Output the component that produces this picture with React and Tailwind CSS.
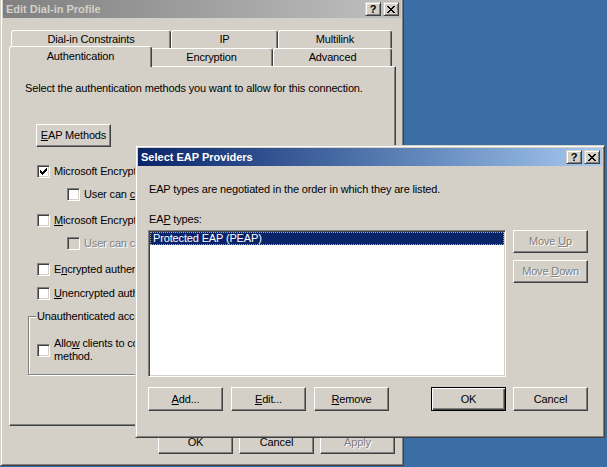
import React from 'react';

// classic 3d bevels
const raised = 'border border-t-white border-l-white border-r-[#404040] border-b-[#404040] shadow-[inset_-1px_-1px_#808080]';
const sunken = 'border border-t-[#808080] border-l-[#808080] border-r-white border-b-white shadow-[inset_1px_1px_#404040,inset_-1px_-1px_#d4d0c8]';
const dimText = 'text-[#808080] [text-shadow:1px_1px_0_#ffffff]';

function Button({ children, className = '', disabled, isDefault }) {
  const frame = isDefault
    ? 'border border-black shadow-[inset_1px_1px_#ffffff,inset_-1px_-1px_#404040,inset_-2px_-2px_#808080]'
    : raised;
  return (
    <div className={`flex items-center justify-center shrink-0 bg-[#d4d0c8] ${frame} ${disabled ? dimText : ''} ${className}`}>
      {children}
    </div>
  );
}

function CaptionButtons() {
  const cap = 'w-[16px] h-[14px] flex items-center justify-center bg-[#d4d0c8] border border-t-[#d4d0c8] border-l-[#d4d0c8] border-r-[#404040] border-b-[#404040] shadow-[inset_1px_1px_#ffffff,inset_-1px_-1px_#808080]';
  return (
    <div className="flex gap-[2px]">
      <div className={cap}>
        <span className="font-bold text-[11px] leading-[11px] text-black tracking-normal">?</span>
      </div>
      <div className={cap}>
        <svg width="8" height="7" viewBox="0 0 8 7" shapeRendering="crispEdges">
          <path fill="#000" d="M0 0h2v1H0zM6 0h2v1H6zM1 1h2v1H1zM5 1h2v1H5zM2 2h4v1H2zM3 3h2v1H3zM2 4h4v1H2zM1 5h2v1H1zM5 5h2v1H5zM0 6h2v1H0zM6 6h2v1H6z" />
        </svg>
      </div>
    </div>
  );
}

function Check({ checked, disabled }) {
  return (
    <span className={`relative block w-[13px] h-[13px] shrink-0 ${sunken} ${disabled ? 'bg-[#d4d0c8]' : 'bg-white'}`}>
      {checked && (
        <svg className="absolute left-[2px] top-[2px]" width="7" height="7" viewBox="0 0 7 7" shapeRendering="crispEdges">
          <path fill="#000" d="M0 2h1v3H0zM1 3h1v3H1zM2 4h1v3H2zM3 3h1v3H3zM4 2h1v3H4zM5 1h1v3H5zM6 0h1v3H6z" />
        </svg>
      )}
    </span>
  );
}

function CheckRow({ className = '', checked, disabled, children }) {
  return (
    <div className={`flex items-center gap-[4px] whitespace-nowrap ${className}`}>
      <Check checked={checked} disabled={disabled} />
      <span className={disabled ? dimText : ''}>{children}</span>
    </div>
  );
}

function Tab({ label, className = '', selected }) {
  return (
    <div
      className={`flex justify-center shrink-0 bg-[#d4d0c8] border-t border-l border-r border-t-white border-l-white border-r-[#404040] rounded-t-[3px] shadow-[inset_-1px_0_#808080] ${
        selected ? 'h-[21px] -ml-[2px] -mr-[2px] -mb-[1px] relative z-10 pt-[3px]' : 'h-[18px] pt-[2px]'
      } ${className}`}
    >
      {label}
    </div>
  );
}

function EditDialInProfile() {
  return (
    <div className={`absolute left-0 -top-[3px] w-[404px] h-[469px] bg-[#d4d0c8] border border-t-[#d4d0c8] border-l-[#d4d0c8] border-r-[#404040] border-b-[#404040] shadow-[inset_1px_1px_#ffffff,inset_-1px_-1px_#808080] p-[2px] flex flex-col`}>
      <div className="h-[18px] flex items-center justify-between pl-[3px] pr-[2px] bg-linear-to-r from-[#808080] to-[#c0c0c0]">
        <span className="font-bold text-[#d4d0c8] tracking-normal">Edit Dial-in Profile</span>
        <CaptionButtons />
      </div>

      <div className="ml-[6px] mt-[12px] w-[387px] flex flex-col">
        <div className="h-[18px] flex pl-[2px]">
          <Tab label="Dial-in Constraints" className="w-[160px]" />
          <Tab label="IP" className="w-[107px]" />
          <Tab label="Multilink" className="w-[114px]" />
        </div>
        <div className="h-[18px] flex items-end pl-[2px]">
          <Tab label="Authentication" className="w-[143px]" selected />
          <Tab label="Encryption" className="w-[123px]" />
          <Tab label="Advanced" className="w-[119px]" />
        </div>

        <div className="h-[360px] flex flex-col overflow-hidden border border-t-white border-l-white border-r-[#404040] border-b-[#404040] shadow-[inset_-1px_-1px_#808080]">
          <p className="mt-[15px] ml-[15px] whitespace-nowrap">
            Select the authentication methods you want to allow for this connection.
          </p>
          <Button className="mt-[29px] ml-[26px] w-[75px] h-[23px]">
            <span><u>E</u>AP Methods</span>
          </Button>

          <CheckRow className="mt-[18px] ml-[27px]" checked>
            Microsoft Encrypted Authentication version <u>2</u> (MS-CHAP v2)
          </CheckRow>
          <CheckRow className="mt-[10px] ml-[57px]">
            User can <u>c</u>hange password after it has expired
          </CheckRow>
          <CheckRow className="mt-[13px] ml-[27px]">
            <u>M</u>icrosoft Encrypted Authentication (MS-CHAP)
          </CheckRow>
          <CheckRow className="mt-[10px] ml-[57px]" disabled>
            User can c<u>h</u>ange password after it has expired
          </CheckRow>
          <CheckRow className="mt-[13px] ml-[27px]">
            E<u>n</u>crypted authentication (CHAP)
          </CheckRow>
          <CheckRow className="mt-[11px] ml-[27px]">
            <u>U</u>nencrypted authentication (PAP, SPAP)
          </CheckRow>

          <div className="relative mt-[16px] ml-[18px] w-[358px] h-[59px] shrink-0 border border-[#808080] shadow-[inset_1px_1px_#ffffff,1px_1px_#ffffff]">
            <span className="absolute -top-[7px] left-[7px] px-[1px] bg-[#d4d0c8] whitespace-nowrap">
              Unauthenticated access
            </span>
            <div className="flex items-center gap-[4px] ml-[8px] mt-[20px]">
              <Check />
              <span className="whitespace-nowrap">
                Allo<u>w</u> clients to connect without negotiating an authentication
                <br />
                method.
              </span>
            </div>
          </div>
        </div>
      </div>

      <div className="mt-[5px] mr-[6px] flex justify-end gap-[6px]">
        <Button className="w-[75px] h-[23px]">OK</Button>
        <Button className="w-[75px] h-[23px]">Cancel</Button>
        <Button className="w-[75px] h-[23px]" disabled>Apply</Button>
      </div>
    </div>
  );
}

function SelectEapProviders() {
  return (
    <div className="absolute left-[135px] top-[145px] w-[470px] h-[293px] bg-[#d4d0c8] border border-t-[#d4d0c8] border-l-[#d4d0c8] border-r-[#404040] border-b-[#404040] shadow-[inset_1px_1px_#ffffff,inset_-1px_-1px_#808080] p-[2px] flex flex-col">
      <div className="h-[18px] flex items-center justify-between pl-[3px] pr-[2px] bg-linear-to-r from-[#0a246a] to-[#a6caf0]">
        <span className="font-bold text-white tracking-normal">Select EAP Providers</span>
        <CaptionButtons />
      </div>

      <p className="mt-[17px] ml-[11px] whitespace-nowrap">
        EAP types are negotiated in the order in which they are listed.
      </p>
      <p className="mt-[17px] ml-[11px]">
        EA<u>P</u> types:
      </p>

      <div className="ml-[10px] w-[440px] flex flex-col">
        <div className="mt-[4px] flex gap-[7px]">
          <div className={`w-[358px] h-[147px] bg-white ${sunken} p-[1px]`}>
            <div className="h-[13px] bg-[#0a246a] text-white pl-[2px] border border-dotted border-[#b8a878] leading-[11px]">
              Protected EAP (PEAP)
            </div>
          </div>
          <div className="flex flex-col gap-[7px]">
            <Button className="w-[75px] h-[23px]" disabled>
              <span>Move <u>U</u>p</span>
            </Button>
            <Button className="w-[75px] h-[23px]" disabled>
              <span>Move <u>D</u>own</span>
            </Button>
          </div>
        </div>

        <div className="mt-[10px] flex">
          <Button className="w-[75px] h-[24px]"><span><u>A</u>dd...</span></Button>
          <Button className="w-[75px] h-[24px] ml-[8px]"><span><u>E</u>dit...</span></Button>
          <Button className="w-[75px] h-[24px] ml-[8px]"><span><u>R</u>emove</span></Button>
          <Button className="w-[75px] h-[24px] ml-auto" isDefault>OK</Button>
          <Button className="w-[75px] h-[24px] ml-[7px]">Cancel</Button>
        </div>
      </div>
    </div>
  );
}

export default function App() {
  return (
    <div className="relative w-[607px] h-[467px] overflow-hidden bg-[#3a6ea5] text-black text-[11px] leading-[13px] tracking-[-0.15px] font-['Liberation_Sans',Arial,sans-serif]">
      <EditDialInProfile />
      <SelectEapProviders />
    </div>
  );
}
